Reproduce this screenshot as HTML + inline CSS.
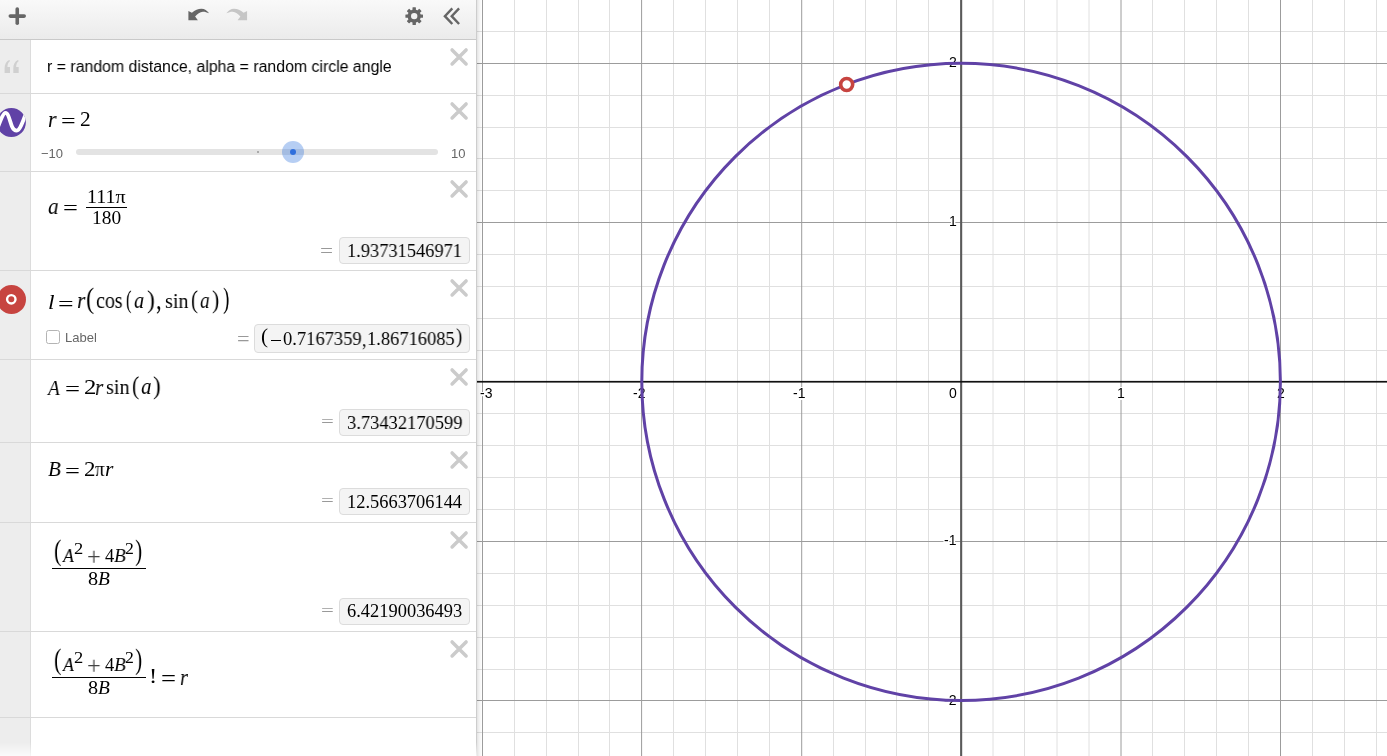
<!DOCTYPE html>
<html><head><meta charset="utf-8">
<style>
html,body{margin:0;padding:0;width:1387px;height:756px;overflow:hidden;background:#fff;position:relative}
.graph{position:absolute;left:0;top:0;}
.mn{stroke:#e0e0e0;stroke-width:1}
.mj{stroke:#9c9c9c;stroke-width:1}
.tk{position:absolute;line-height:1;white-space:nowrap;transform-origin:0 0;will-change:transform;}
.lab{text-shadow:1.5px 0 0 #fff,-1.5px 0 0 #fff,0 1.5px 0 #fff,0 -1.5px 0 #fff,1px 1px 0 #fff,-1px 1px 0 #fff,1px -1px 0 #fff,-1px -1px 0 #fff;}
</style>
</head><body>
<svg class="graph" width="1387" height="756">
<g><line x1="514.5" y1="0" x2="514.5" y2="756" class="mn"/>
<line x1="546.5" y1="0" x2="546.5" y2="756" class="mn"/>
<line x1="578.5" y1="0" x2="578.5" y2="756" class="mn"/>
<line x1="609.5" y1="0" x2="609.5" y2="756" class="mn"/>
<line x1="673.5" y1="0" x2="673.5" y2="756" class="mn"/>
<line x1="705.5" y1="0" x2="705.5" y2="756" class="mn"/>
<line x1="737.5" y1="0" x2="737.5" y2="756" class="mn"/>
<line x1="769.5" y1="0" x2="769.5" y2="756" class="mn"/>
<line x1="833.5" y1="0" x2="833.5" y2="756" class="mn"/>
<line x1="865.5" y1="0" x2="865.5" y2="756" class="mn"/>
<line x1="896.5" y1="0" x2="896.5" y2="756" class="mn"/>
<line x1="928.5" y1="0" x2="928.5" y2="756" class="mn"/>
<line x1="993.0" y1="0" x2="993.0" y2="756" class="mn"/>
<line x1="1024.5" y1="0" x2="1024.5" y2="756" class="mn"/>
<line x1="1057.0" y1="0" x2="1057.0" y2="756" class="mn"/>
<line x1="1089.0" y1="0" x2="1089.0" y2="756" class="mn"/>
<line x1="1152.5" y1="0" x2="1152.5" y2="756" class="mn"/>
<line x1="1184.5" y1="0" x2="1184.5" y2="756" class="mn"/>
<line x1="1216.5" y1="0" x2="1216.5" y2="756" class="mn"/>
<line x1="1248.5" y1="0" x2="1248.5" y2="756" class="mn"/>
<line x1="1312.5" y1="0" x2="1312.5" y2="756" class="mn"/>
<line x1="1344.5" y1="0" x2="1344.5" y2="756" class="mn"/>
<line x1="1376.5" y1="0" x2="1376.5" y2="756" class="mn"/>
<line x1="477" y1="31.5" x2="1387" y2="31.5" class="mn"/>
<line x1="477" y1="95.5" x2="1387" y2="95.5" class="mn"/>
<line x1="477" y1="127.5" x2="1387" y2="127.5" class="mn"/>
<line x1="477" y1="158.5" x2="1387" y2="158.5" class="mn"/>
<line x1="477" y1="190.5" x2="1387" y2="190.5" class="mn"/>
<line x1="477" y1="254.5" x2="1387" y2="254.5" class="mn"/>
<line x1="477" y1="286.5" x2="1387" y2="286.5" class="mn"/>
<line x1="477" y1="318.5" x2="1387" y2="318.5" class="mn"/>
<line x1="477" y1="350.5" x2="1387" y2="350.5" class="mn"/>
<line x1="477" y1="413.5" x2="1387" y2="413.5" class="mn"/>
<line x1="477" y1="445.5" x2="1387" y2="445.5" class="mn"/>
<line x1="477" y1="477.5" x2="1387" y2="477.5" class="mn"/>
<line x1="477" y1="509.5" x2="1387" y2="509.5" class="mn"/>
<line x1="477" y1="573.5" x2="1387" y2="573.5" class="mn"/>
<line x1="477" y1="605.5" x2="1387" y2="605.5" class="mn"/>
<line x1="477" y1="637.5" x2="1387" y2="637.5" class="mn"/>
<line x1="477" y1="669.5" x2="1387" y2="669.5" class="mn"/>
<line x1="477" y1="732.5" x2="1387" y2="732.5" class="mn"/>
<line x1="482.5" y1="0" x2="482.5" y2="756" class="mj"/>
<line x1="641.6" y1="0" x2="641.6" y2="756" class="mj"/>
<line x1="801.7" y1="0" x2="801.7" y2="756" class="mj"/>
<line x1="1121.0" y1="0" x2="1121.0" y2="756" class="mj"/>
<line x1="1280.5" y1="0" x2="1280.5" y2="756" class="mj"/>
<line x1="477" y1="63.5" x2="1387" y2="63.5" class="mj"/>
<line x1="477" y1="222.5" x2="1387" y2="222.5" class="mj"/>
<line x1="477" y1="541.5" x2="1387" y2="541.5" class="mj"/>
<line x1="477" y1="700.5" x2="1387" y2="700.5" class="mj"/></g>
<rect x="960.1" y="0" width="2.1" height="756" fill="#5a5a5a"/>
<rect x="477" y="380.9" width="910" height="1.7" fill="#111"/>
</svg>
<div class="tk lab" style="left:480.10px;top:385.95px;font-size:14px;color:#000;font-family:'Liberation Sans',sans-serif;">-3</div>
<div class="tk lab" style="left:633.20px;top:386.00px;font-size:14px;color:#000;font-family:'Liberation Sans',sans-serif;">-2</div>
<div class="tk lab" style="left:793.00px;top:385.95px;font-size:14px;color:#000;font-family:'Liberation Sans',sans-serif;">-1</div>
<div class="tk lab" style="left:948.90px;top:386.00px;font-size:14px;color:#000;font-family:'Liberation Sans',sans-serif;">0</div>
<div class="tk lab" style="left:1117.30px;top:386.00px;font-size:14px;color:#000;font-family:'Liberation Sans',sans-serif;">1</div>
<div class="tk lab" style="left:1276.70px;top:386.00px;font-size:14px;color:#000;font-family:'Liberation Sans',sans-serif;">2</div>
<div class="tk lab" style="left:948.60px;top:55.15px;font-size:14px;color:#000;font-family:'Liberation Sans',sans-serif;">2</div>
<div class="tk lab" style="left:948.60px;top:213.95px;font-size:14px;color:#000;font-family:'Liberation Sans',sans-serif;">1</div>
<div class="tk lab" style="left:943.60px;top:532.95px;font-size:14px;color:#000;font-family:'Liberation Sans',sans-serif;">-1</div>
<div class="tk lab" style="left:943.60px;top:692.85px;font-size:14px;color:#000;font-family:'Liberation Sans',sans-serif;">-2</div>
<svg class="graph" width="1387" height="756">
<ellipse cx="961.1" cy="381.9" rx="319.3" ry="318.6" fill="none" stroke="#6042a6" stroke-width="3"/>
<circle cx="846.67" cy="84.46" r="6" fill="#fff" stroke="#c74440" stroke-width="3.6"/>
</svg>
<style>
#panel{position:absolute;left:0;top:0;width:476px;height:756px;background:#fff;border-right:1px solid #cdcdcd;}
#shadow{position:absolute;left:477px;top:0;width:5px;height:756px;background:linear-gradient(to right,rgba(0,0,0,0.11),rgba(0,0,0,0.05) 40%,rgba(0,0,0,0));}
#hdr{position:absolute;left:0;top:0;width:476px;height:39px;background:linear-gradient(#f9f9f9,#ebebeb);border-bottom:1px solid #c9c9c9;}
#gut{position:absolute;left:0;top:40px;width:30px;height:716px;background:#ededed;border-right:1px solid #dcdcdc;}
.rb{position:absolute;left:0;width:476px;height:1px;background:#d9d9d9;}
.sans{font-family:"Liberation Sans",sans-serif;}
.ser{font-family:"Liberation Serif",serif;}
.abs{position:absolute;white-space:nowrap;}
.note{left:48px;top:57px;font-size:15px;color:#000;}
.x{position:absolute;left:450px;width:19px;height:19px;}
.res{position:absolute;background:#f4f4f4;border:1px solid #dcdcdc;border-radius:4px;box-sizing:border-box;}
.eqg{position:absolute;font-family:"Liberation Serif",serif;font-size:18px;color:#999;}
.rtxt{position:absolute;font-family:"Liberation Serif",serif;font-size:17.5px;color:#222;white-space:nowrap;}
.m{font-family:"Liberation Serif",serif;font-size:20px;color:#000;white-space:nowrap;position:absolute;}
.i{font-style:italic;}
</style>
<div id="panel"></div>
<div id="shadow"></div>
<div id="hdr">
  <svg width="476" height="39" style="position:absolute;left:0;top:0">
    <g fill="#666">
      <rect x="8.5" y="14.3" width="17.5" height="3.6" rx="1.8"/>
      <rect x="15.45" y="7.2" width="3.6" height="17.8" rx="1.8"/>
    </g>
    <path d="M188.4,11 L191.9,12.8 C195,10 198,8.7 201.5,8.7 C204.5,8.7 207.2,10.5 209.1,13.3 C206.7,12.1 204.6,11.6 202.9,11.7 C200,11.8 197.3,13.8 195.1,16.5 L197.9,20.2 L188.4,20.2 Z" fill="#666"/>
    <path d="M 247.1,11.0 L 243.6,12.8 C 240.5,10.0 237.5,8.7 234.0,8.7 C 231.0,8.7 228.3,10.5 226.4,13.3 C 228.8,12.1 230.9,11.6 232.6,11.7 C 235.5,11.8 238.2,13.8 240.4,16.5 L 237.6,20.2 L 247.1,20.2 Z" fill="#c6c6c6"/>
    <defs><mask id="gm"><rect x="395" y="0" width="40" height="39" fill="#fff"/><circle cx="414.2" cy="16.1" r="3.2" fill="#000"/></mask></defs>
    <g fill="#666" mask="url(#gm)">
      <circle cx="414.2" cy="16.1" r="6.6"/>
      <g transform="translate(414.2 16.1)">
        <rect x="-1.7" y="-8.8" width="3.4" height="17.6" rx="0.5"/>
        <rect x="-1.7" y="-8.8" width="3.4" height="17.6" rx="0.5" transform="rotate(45)"/>
        <rect x="-1.7" y="-8.8" width="3.4" height="17.6" rx="0.5" transform="rotate(90)"/>
        <rect x="-1.7" y="-8.8" width="3.4" height="17.6" rx="0.5" transform="rotate(135)"/>
      </g>
    </g>
    <g fill="none" stroke="#666" stroke-width="2.4">
      <path d="M452.3,8.4 L444.9,16.2 L452.3,24"/>
      <path d="M459.1,8.4 L451.7,16.2 L459.1,24"/>
    </g>
  </svg>
</div>
<div id="gut"></div>
<div class="rb" style="top:93px"></div>
<div class="rb" style="top:171px"></div>
<div class="rb" style="top:270px"></div>
<div class="rb" style="top:359px"></div>
<div class="rb" style="top:442px"></div>
<div class="rb" style="top:522px"></div>
<div class="rb" style="top:631px"></div>
<div class="rb" style="top:717px"></div>

<!-- gutter icons -->
<svg width="30" height="756" style="position:absolute;left:0;top:0">
  <g fill="#d0d0d0">
    <path d="M4.6,73 L10,73 L10,67 L7.4,67 C7.5,64.2 8.4,62.3 10.1,61.1 L9.2,60 C6.2,61.4 4.6,64.5 4.6,68.2 Z"/>
    <path d="M13.3,73 L18.7,73 L18.7,67 L16.1,67 C16.2,64.2 17.1,62.3 18.8,61.1 L17.9,60 C14.9,61.4 13.3,64.5 13.3,68.2 Z"/>
  </g>
  <circle cx="11.35" cy="122.5" r="14.5" fill="#6042a6"/>
  <defs><clipPath id="sc"><circle cx="11.35" cy="122.5" r="14.5"/></clipPath></defs><path clip-path="url(#sc)" d="M-2,127 C1,119 3.5,112.8 5.6,112.8 C8.5,112.8 10,122 12.2,127 C13.5,130 15,130.6 16.8,130.6 C19.5,130.6 22.5,123 26.5,112" fill="none" stroke="#fff" stroke-width="3.8"/>
  <circle cx="11.5" cy="299.5" r="14.5" fill="#c74440"/>
  <circle cx="11.3" cy="299.3" r="4.2" fill="none" stroke="#fff" stroke-width="2.4"/>
</svg>

<!-- close X icons -->
<svg width="476" height="756" style="position:absolute;left:0;top:0">
  <g stroke="#cbcbcb" stroke-width="3.5" stroke-linecap="round" fill="none">
    <path d="M452.1,49.9 L466.1,63.9 M466.1,49.9 L452.1,63.9"/>
    <path d="M452.1,103.9 L466.1,117.9 M466.1,103.9 L452.1,117.9"/>
    <path d="M452.1,181.9 L466.1,195.9 M466.1,181.9 L452.1,195.9"/>
    <path d="M452.1,280.9 L466.1,294.9 M466.1,280.9 L452.1,294.9"/>
    <path d="M452.1,369.9 L466.1,383.9 M466.1,369.9 L452.1,383.9"/>
    <path d="M452.1,452.9 L466.1,466.9 M466.1,452.9 L452.1,466.9"/>
    <path d="M452.1,532.9 L466.1,546.9 M466.1,532.9 L452.1,546.9"/>
    <path d="M452.1,641.9 L466.1,655.9 M466.1,641.9 L452.1,655.9"/>
  </g>
</svg>

<!-- slider -->

<div style="position:absolute;left:76px;top:149px;width:362px;height:6px;background:#e3e3e3;border-radius:3px"></div>
<div style="position:absolute;left:257px;top:151px;width:2px;height:2px;background:#aaa"></div>
<div style="position:absolute;left:282px;top:141px;width:22px;height:22px;border-radius:50%;background:rgba(47,114,220,0.35)"></div>
<div style="position:absolute;left:289.8px;top:148.9px;width:6.2px;height:6.2px;border-radius:50%;background:#2f6fdc"></div>
<!-- fraction bars -->
<div style="position:absolute;left:85.8px;top:207px;width:41.1px;height:1px;background:#000"></div>
<div style="position:absolute;left:51.9px;top:567.6px;width:94.2px;height:1.4px;background:#000"></div>
<div style="position:absolute;left:51.9px;top:676.6px;width:94.2px;height:1.4px;background:#000"></div>
<!-- checkbox -->
<div style="position:absolute;left:46px;top:330px;width:14px;height:14px;box-sizing:border-box;border:1px solid #b4b4b4;border-radius:2.5px;background:#fff"></div>
<!-- result boxes -->
<div class="res" style="left:339px;top:237px;width:131px;height:27px"></div>
<div class="res" style="left:254px;top:324px;width:216px;height:29px"></div>
<div class="res" style="left:339px;top:409px;width:131px;height:27px"></div>
<div class="res" style="left:339px;top:488px;width:131px;height:27px"></div>
<div class="res" style="left:339px;top:598px;width:131px;height:27px"></div>
<div style="position:absolute;left:270.8px;top:339.6px;width:10.3px;height:1.1px;background:#000"></div>
<div class="tk" style="left:47.31px;top:58.85px;font-size:16px;color:#000;font-family:'Liberation Sans',sans-serif;transform:scaleX(0.9913);">r = random distance, alpha = random circle angle</div>
<div class="tk" style="left:47.75px;top:108.53px;font-size:22.13px;color:#000;font-family:'Liberation Serif',serif;font-style:italic;transform:scaleX(0.9555);">r</div>
<div class="tk" style="left:60.50px;top:111.25px;font-size:20.40px;color:#000;font-family:'Liberation Serif',serif;transform:scaleX(1.2724);">=</div>
<div class="tk" style="left:79.85px;top:109.15px;font-size:21.38px;color:#000;font-family:'Liberation Serif',serif;transform:scaleX(0.9937);">2</div>
<div class="tk" style="left:40.60px;top:146.95px;font-size:13px;color:#666;font-family:'Liberation Sans',sans-serif;">−10</div>
<div class="tk" style="left:450.60px;top:146.90px;font-size:13px;color:#666;font-family:'Liberation Sans',sans-serif;">10</div>
<div class="tk" style="left:47.77px;top:195.65px;font-size:22.08px;color:#000;font-family:'Liberation Serif',serif;font-style:italic;transform:scaleX(0.9583);">a</div>
<div class="tk" style="left:62.68px;top:197.51px;font-size:21.60px;color:#000;font-family:'Liberation Serif',serif;transform:scaleX(1.2214);">=</div>
<div class="tk" style="left:86.90px;top:188.10px;font-size:18.81px;color:#000;font-family:'Liberation Serif',serif;transform:scaleX(1.0635);">111π</div>
<div class="tk" style="left:92.05px;top:208.03px;font-size:19.26px;color:#000;font-family:'Liberation Serif',serif;transform:scaleX(1.0079);">180</div>
<div class="tk" style="left:47.53px;top:291.88px;font-size:20.87px;color:#000;font-family:'Liberation Serif',serif;font-style:italic;transform:scaleX(1.1260);">l</div>
<div class="tk" style="left:57.72px;top:293.60px;font-size:20.00px;color:#000;font-family:'Liberation Serif',serif;transform:scaleX(1.3830);">=</div>
<div class="tk" style="left:77.03px;top:289.42px;font-size:23.83px;color:#000;font-family:'Liberation Serif',serif;font-style:italic;transform:scaleX(0.9112);">r</div>
<div class="tk" style="left:86.32px;top:283.86px;font-size:29.56px;color:#000;font-family:'Liberation Serif',serif;transform:scaleX(0.8329);">(</div>
<div class="tk" style="left:96.20px;top:289.75px;font-size:22.92px;color:#000;font-family:'Liberation Serif',serif;transform:scaleX(0.8727);">cos</div>
<div class="tk" style="left:126.24px;top:286.57px;font-size:25.22px;color:#000;font-family:'Liberation Serif',serif;transform:scaleX(0.6557);">(</div>
<div class="tk" style="left:134.39px;top:289.75px;font-size:22.92px;color:#000;font-family:'Liberation Serif',serif;font-style:italic;transform:scaleX(0.8829);">a</div>
<div class="tk" style="left:146.60px;top:286.57px;font-size:25.22px;color:#000;font-family:'Liberation Serif',serif;transform:scaleX(0.9302);">)</div>
<div class="tk" style="left:156.12px;top:284.58px;font-size:28.80px;color:#000;font-family:'Liberation Serif',serif;transform:scaleX(0.7639);">,</div>
<div class="tk" style="left:164.90px;top:291.44px;font-size:20.91px;color:#000;font-family:'Liberation Serif',serif;transform:scaleX(0.9608);">sin</div>
<div class="tk" style="left:191.17px;top:286.57px;font-size:25.22px;color:#000;font-family:'Liberation Serif',serif;transform:scaleX(0.8234);">(</div>
<div class="tk" style="left:199.72px;top:289.75px;font-size:22.92px;color:#000;font-family:'Liberation Serif',serif;font-style:italic;transform:scaleX(0.8423);">a</div>
<div class="tk" style="left:211.94px;top:286.57px;font-size:25.22px;color:#000;font-family:'Liberation Serif',serif;transform:scaleX(0.8692);">)</div>
<div class="tk" style="left:222.82px;top:283.86px;font-size:29.56px;color:#000;font-family:'Liberation Serif',serif;transform:scaleX(0.6507);">)</div>
<div class="tk" style="left:64.80px;top:330.95px;font-size:13px;color:#666;font-family:'Liberation Sans',sans-serif;">Label</div>
<div class="tk" style="left:260.95px;top:325.93px;font-size:21.22px;color:#000;font-family:'Liberation Serif',serif;transform:scaleX(0.9968);">(</div>
<div class="tk" style="left:282.66px;top:329.82px;font-size:18.68px;color:#000;font-family:'Liberation Serif',serif;transform:scaleX(0.9913);">0.7167359</div>
<div class="tk" style="left:361.61px;top:328.60px;font-size:20.00px;color:#000;font-family:'Liberation Serif',serif;transform:scaleX(0.8667);">,</div>
<div class="tk" style="left:366.94px;top:329.82px;font-size:18.68px;color:#000;font-family:'Liberation Serif',serif;transform:scaleX(0.9897);">1.86716085</div>
<div class="tk" style="left:456.23px;top:325.93px;font-size:21.22px;color:#000;font-family:'Liberation Serif',serif;transform:scaleX(0.8880);">)</div>
<div class="tk" style="left:48.26px;top:377.06px;font-size:22.00px;color:#000;font-family:'Liberation Serif',serif;font-style:italic;transform:scaleX(0.8747);">A</div>
<div class="tk" style="left:64.77px;top:378.70px;font-size:20.80px;color:#000;font-family:'Liberation Serif',serif;transform:scaleX(1.2786);">=</div>
<div class="tk" style="left:84.11px;top:377.35px;font-size:21.38px;color:#000;font-family:'Liberation Serif',serif;transform:scaleX(1.1574);">2</div>
<div class="tk" style="left:94.67px;top:375.14px;font-size:24.04px;color:#000;font-family:'Liberation Serif',serif;font-style:italic;transform:scaleX(0.8675);">r</div>
<div class="tk" style="left:106.39px;top:376.90px;font-size:21.67px;color:#000;font-family:'Liberation Serif',serif;transform:scaleX(0.9314);">sin</div>
<div class="tk" style="left:131.84px;top:373.34px;font-size:25.44px;color:#000;font-family:'Liberation Serif',serif;transform:scaleX(0.8465);">(</div>
<div class="tk" style="left:141.17px;top:375.32px;font-size:23.54px;color:#000;font-family:'Liberation Serif',serif;font-style:italic;transform:scaleX(0.8891);">a</div>
<div class="tk" style="left:153.21px;top:373.34px;font-size:25.44px;color:#000;font-family:'Liberation Serif',serif;transform:scaleX(0.9070);">)</div>
<div class="tk" style="left:47.79px;top:459.28px;font-size:21.23px;color:#000;font-family:'Liberation Serif',serif;font-style:italic;transform:scaleX(0.9826);">B</div>
<div class="tk" style="left:64.88px;top:461.10px;font-size:20.80px;color:#000;font-family:'Liberation Serif',serif;transform:scaleX(1.2684);">=</div>
<div class="tk" style="left:84.08px;top:459.28px;font-size:21.23px;color:#000;font-family:'Liberation Serif',serif;transform:scaleX(1.0833);">2</div>
<div class="tk" style="left:94.81px;top:458.85px;font-size:21.49px;color:#000;font-family:'Liberation Serif',serif;transform:scaleX(0.8725);">π</div>
<div class="tk" style="left:104.54px;top:459.06px;font-size:21.49px;color:#000;font-family:'Liberation Serif',serif;font-style:italic;">r</div>
<div class="tk" style="left:54.31px;top:536.07px;font-size:28.78px;color:#000;font-family:'Liberation Serif',serif;transform:scaleX(0.7752);">(</div>
<div class="tk" style="left:63.49px;top:545.95px;font-size:19.69px;color:#000;font-family:'Liberation Serif',serif;font-style:italic;transform:scaleX(0.9079);">A</div>
<div class="tk" style="left:74.46px;top:540.52px;font-size:16.00px;color:#000;font-family:'Liberation Serif',serif;transform:scaleX(1.1563);">2</div>
<div class="tk" style="left:86.88px;top:543.88px;font-size:26.00px;color:#444;font-family:'Liberation Serif',serif;transform:scaleX(0.9411);">+</div>
<div class="tk" style="left:104.83px;top:546.78px;font-size:18.46px;color:#000;font-family:'Liberation Serif',serif;">4</div>
<div class="tk" style="left:113.51px;top:545.76px;font-size:19.69px;color:#000;font-family:'Liberation Serif',serif;font-style:italic;transform:scaleX(0.9718);">B</div>
<div class="tk" style="left:125.19px;top:540.52px;font-size:16.00px;color:#000;font-family:'Liberation Serif',serif;transform:scaleX(1.1094);">2</div>
<div class="tk" style="left:135.25px;top:536.07px;font-size:28.78px;color:#000;font-family:'Liberation Serif',serif;transform:scaleX(0.7484);">)</div>
<div class="tk" style="left:88.09px;top:568.73px;font-size:19.85px;color:#000;font-family:'Liberation Serif',serif;transform:scaleX(1.0195);">8</div>
<div class="tk" style="left:97.91px;top:568.81px;font-size:19.38px;color:#000;font-family:'Liberation Serif',serif;font-style:italic;transform:scaleX(0.9962);">B</div>
<div class="tk" style="left:54.31px;top:645.07px;font-size:28.78px;color:#000;font-family:'Liberation Serif',serif;transform:scaleX(0.7752);">(</div>
<div class="tk" style="left:63.49px;top:654.95px;font-size:19.69px;color:#000;font-family:'Liberation Serif',serif;font-style:italic;transform:scaleX(0.9079);">A</div>
<div class="tk" style="left:74.46px;top:649.52px;font-size:16.00px;color:#000;font-family:'Liberation Serif',serif;transform:scaleX(1.1563);">2</div>
<div class="tk" style="left:86.88px;top:652.88px;font-size:26.00px;color:#444;font-family:'Liberation Serif',serif;transform:scaleX(0.9411);">+</div>
<div class="tk" style="left:104.83px;top:655.78px;font-size:18.46px;color:#000;font-family:'Liberation Serif',serif;">4</div>
<div class="tk" style="left:113.51px;top:654.76px;font-size:19.69px;color:#000;font-family:'Liberation Serif',serif;font-style:italic;transform:scaleX(0.9718);">B</div>
<div class="tk" style="left:125.19px;top:649.52px;font-size:16.00px;color:#000;font-family:'Liberation Serif',serif;transform:scaleX(1.1094);">2</div>
<div class="tk" style="left:135.25px;top:645.07px;font-size:28.78px;color:#000;font-family:'Liberation Serif',serif;transform:scaleX(0.7484);">)</div>
<div class="tk" style="left:88.09px;top:677.73px;font-size:19.85px;color:#000;font-family:'Liberation Serif',serif;transform:scaleX(1.0195);">8</div>
<div class="tk" style="left:97.91px;top:677.81px;font-size:19.38px;color:#000;font-family:'Liberation Serif',serif;font-style:italic;transform:scaleX(0.9962);">B</div>
<div class="tk" style="left:149.00px;top:666.48px;font-size:21.79px;color:#000;font-family:'Liberation Serif',serif;transform:scaleX(1.1264);">!</div>
<div class="tk" style="left:160.57px;top:666.62px;font-size:24.80px;color:#000;font-family:'Liberation Serif',serif;transform:scaleX(1.0724);">=</div>
<div class="tk" style="left:180.10px;top:665.93px;font-size:22.98px;color:#000;font-family:'Liberation Serif',serif;font-style:italic;transform:scaleX(0.8704);">r</div>
<div class="tk" style="left:320.34px;top:242.04px;font-size:18.00px;color:#999;font-family:'Liberation Serif',serif;transform:scaleX(1.2884);">=</div>
<div class="tk" style="left:346.94px;top:241.53px;font-size:18.68px;color:#000;font-family:'Liberation Serif',serif;transform:scaleX(0.9857);">1.93731546971</div>
<div class="tk" style="left:236.98px;top:328.65px;font-size:20.40px;color:#999;font-family:'Liberation Serif',serif;transform:scaleX(1.0951);">=</div>
<div class="tk" style="left:320.66px;top:414.38px;font-size:16.80px;color:#999;font-family:'Liberation Serif',serif;transform:scaleX(1.3551);">=</div>
<div class="tk" style="left:346.78px;top:413.23px;font-size:19.26px;color:#000;font-family:'Liberation Serif',serif;transform:scaleX(0.9598);">3.73432170599</div>
<div class="tk" style="left:320.66px;top:493.48px;font-size:16.80px;color:#999;font-family:'Liberation Serif',serif;transform:scaleX(1.3551);">=</div>
<div class="tk" style="left:346.84px;top:492.82px;font-size:18.09px;color:#000;font-family:'Liberation Serif',serif;transform:scaleX(1.0184);">12.5663706144</div>
<div class="tk" style="left:320.66px;top:603.38px;font-size:16.80px;color:#999;font-family:'Liberation Serif',serif;transform:scaleX(1.3551);">=</div>
<div class="tk" style="left:346.96px;top:601.98px;font-size:18.38px;color:#000;font-family:'Liberation Serif',serif;transform:scaleX(1.0042);">6.42190036493</div>
<div style="position:absolute;left:0;top:742px;width:477px;height:14px;background:linear-gradient(rgba(255,255,255,0),rgba(255,255,255,0.75))"></div>

</body></html>
